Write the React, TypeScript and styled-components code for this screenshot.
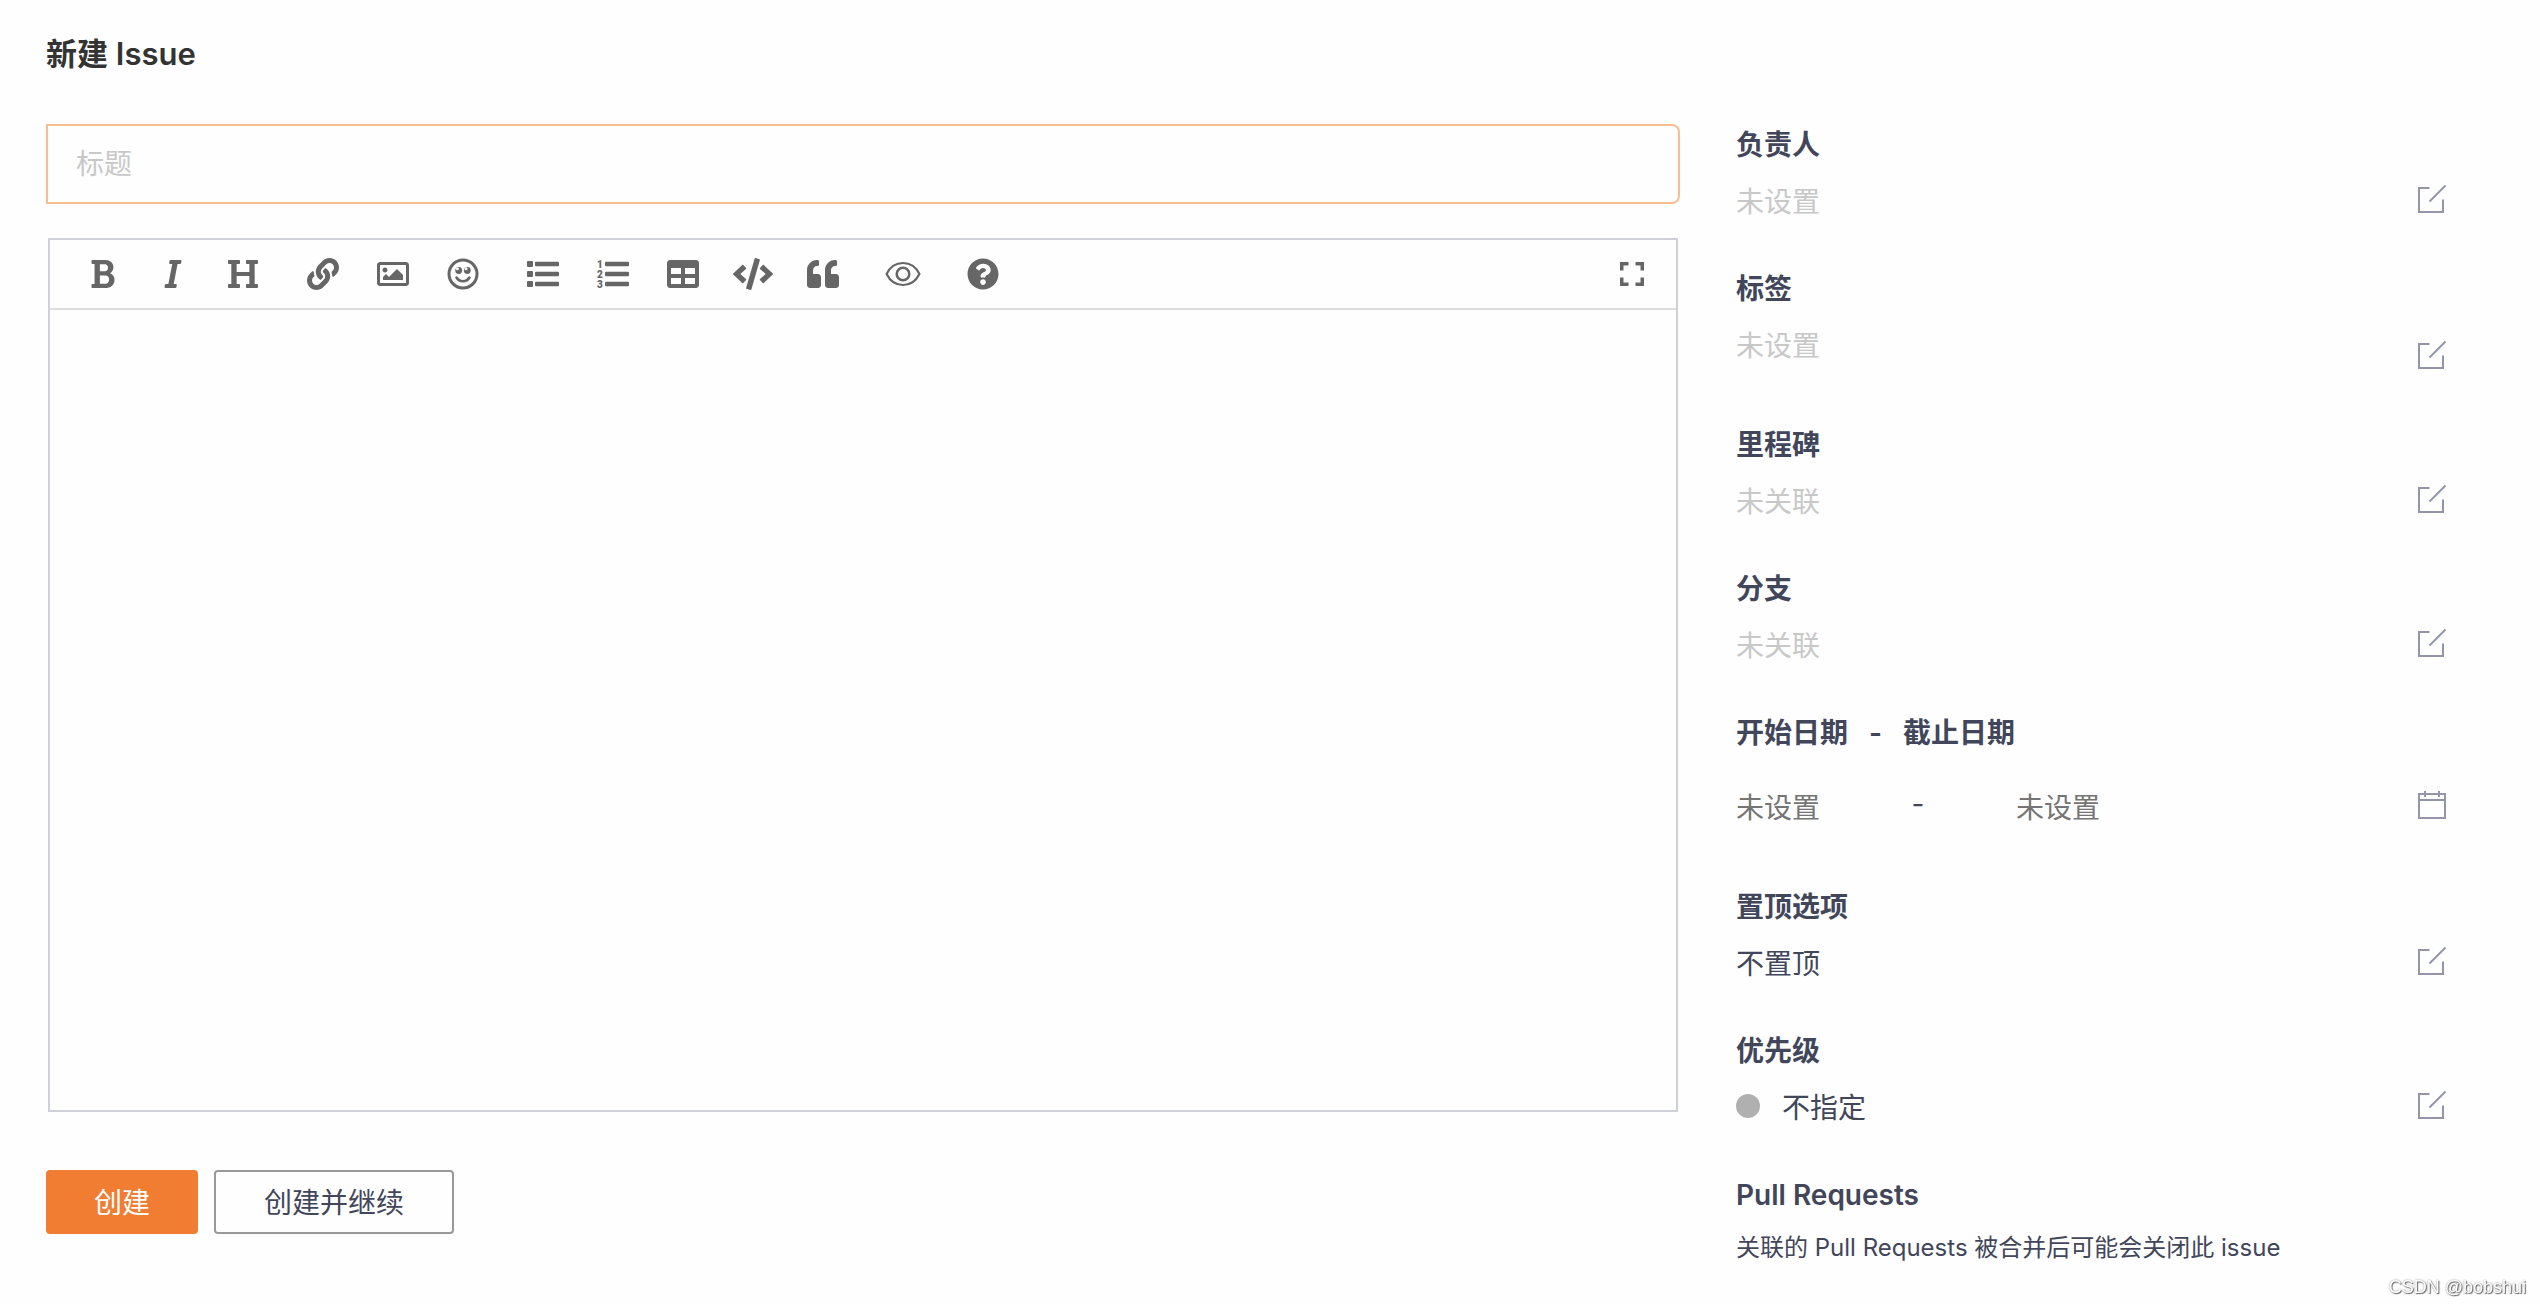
import React from "react";
import styled, { createGlobalStyle } from "styled-components";
import { FaCode, FaLink, FaQuestionCircle, FaQuoteLeft, FaRegImage, FaTable } from "react-icons/fa";

const ink = "#41465b";
const muted = "#c8c8c8";
const iconGrey = "#666666";
const line = "#d0d0dd";

const GlobalStyle = createGlobalStyle`
  *, *::before, *::after { box-sizing: border-box; }
  body {
    margin: 0;
    background: #fefefe;
    color: ${ink};
    font-family: Inter, "Noto Sans CJK SC", sans-serif;
    font-size: 28px;
  }
  button, input, textarea { font: inherit; color: inherit; }
`;

const Page = styled.main`
  padding: 30px 92px 30px 46px;
`;

const PageTitle = styled.h1`
  margin: 0;
  font-size: 31px;
  line-height: 48px;
  font-weight: 600;
  color: #333333;
`;

const Columns = styled.div`
  display: grid;
  grid-template-columns: minmax(0, 1fr) 712px;
  column-gap: 56px;
  align-items: start;
  margin-top: 38px;
`;

const Form = styled.form`
  padding-top: 8px;
`;

const TitleInput = styled.input`
  display: block;
  width: 100%;
  height: 80px;
  padding: 0 28px;
  border: 2px solid #f9bd92;
  border-radius: 0 8px 8px 0;
  background: transparent;
  outline: none;
  &::placeholder { color: ${muted}; opacity: 1; }
`;

const Editor = styled.section`
  margin: 34px 2px 0;
  border: 2px solid ${line};
`;

const Toolbar = styled.div`
  display: flex;
  align-items: center;
  gap: 20px;
  height: 70px;
  padding: 0 14px 0 23px;
  border-bottom: 2px solid #dddddd;
  color: ${iconGrey};
`;

const ToolGroup = styled.div<{ $end?: boolean }>`
  display: flex;
  gap: 10px;
  margin-left: ${(p) => (p.$end ? "auto" : "0")};
`;

const ToolButton = styled.button`
  display: grid;
  place-items: center;
  width: 60px;
  height: 60px;
  padding: 0;
  border: 0;
  background: none;
  cursor: pointer;
`;

const CodeIcon = styled(FaCode)`
  width: 40px;
  height: 32px;
`;

const Body = styled.textarea`
  display: block;
  width: 100%;
  height: 800px;
  padding: 20px 28px;
  border: 0;
  outline: none;
  resize: none;
  background: transparent;
`;

const Actions = styled.div`
  display: flex;
  gap: 16px;
  margin-top: 58px;
`;

const ActionButton = styled.button<{ $primary?: boolean }>`
  height: 64px;
  padding: 0 ${(p) => (p.$primary ? "46px" : "48px")} 2px;
  border: 2px solid ${(p) => (p.$primary ? "#f07d32" : "#999999")};
  border-radius: 4px;
  background: ${(p) => (p.$primary ? "#f07d32" : "transparent")};
  color: ${(p) => (p.$primary ? "#ffffff" : ink)};
  cursor: pointer;
`;

const Sidebar = styled.aside`
  display: flex;
  flex-direction: column;
  gap: 36px;
`;

const FieldLabel = styled.h2`
  display: flex;
  gap: 21px;
  margin: 0;
  font-size: 28px;
  line-height: 58px;
  font-weight: 600;
`;

const FieldRow = styled.div<{ $tall?: boolean }>`
  display: flex;
  justify-content: space-between;
  align-items: flex-end;
  height: ${(p) => (p.$tall ? "62px" : "50px")};
`;

const Value = styled.span<{ $unset?: boolean }>`
  display: flex;
  align-items: center;
  align-self: flex-start;
  gap: 22px;
  line-height: 56px;
  color: ${(p) => (p.$unset ? muted : ink)};
`;

const Dot = styled.i`
  width: 24px;
  height: 24px;
  margin-bottom: 4px;
  border-radius: 50%;
  background: #b0b0b0;
`;

const IconButton = styled.button`
  display: grid;
  place-items: center;
  width: 32px;
  height: 50px;
  padding: 0;
  border: 0;
  background: none;
  color: #9296a8;
  cursor: pointer;
`;

const DateRow = styled.div`
  display: grid;
  grid-template-columns: 160px 44px 1fr 32px;
  align-items: start;
  height: 56px;
  margin: 18px 0 6px;
  line-height: 48px;
  text-align: center;
`;

const DateInput = styled.input<{ $end?: boolean }>`
  display: block;
  width: ${(p) => (p.$end ? "240px" : "160px")};
  height: 56px;
  padding: 0 0 0 ${(p) => (p.$end ? "76px" : "0")};
  border: 0;
  outline: none;
  background: transparent;
  &::placeholder { color: #757575; opacity: 1; }
`;

const Note = styled.p`
  margin: 0;
  font-size: 24px;
  line-height: 48px;
`;

const Watermark = styled.small`
  position: fixed;
  right: 14px;
  bottom: 4px;
  font-family: "Liberation Sans", Arial, sans-serif;
  font-size: 18px;
  line-height: 26px;
  color: #ffffff;
  text-shadow: 1px 1px 1px #666666, 0 0 2px #888888;
`;

const EditIcon = () => (
  <svg width="32" height="32" viewBox="0 0 32 32" fill="none" stroke="currentColor" strokeWidth="2" aria-hidden="true">
    <path d="M13.5 5H3v24h24V16.500" />
    <path d="M13.500 18.500L29.500 2.500" />
  </svg>
);

const CalendarIcon = () => (
  <svg width="32" height="32" viewBox="0 0 32 32" fill="none" stroke="currentColor" strokeWidth="2" aria-hidden="true">
    <path d="M3 5h26v24H3zM3 11h26M9 2v6M23 2v6" />
  </svg>
);

const BoldIcon = () => (
  <svg width="24" height="32" viewBox="0 0 384 512" fill="currentColor" aria-hidden="true">
    <path d="M304.793 243.891c33.639-18.537 53.657-54.16 53.657-95.693 0-48.236-26.25-87.626-68.626-104.179C265.138 34.01 240.849 32 209.661 32H24c-8.837 0-16 7.163-16 16v33.049c0 8.837 7.163 16 16 16h33.113v318.53H24c-8.837 0-16 7.163-16 16V464c0 8.837 7.163 16 16 16h195.69c24.203 0 44.834-1.289 66.866-7.584C337.52 457.193 376 410.647 376 350.014c0-52.168-26.573-91.684-71.207-106.123zM142.217 100.809h67.444c16.294 0 27.536 2.019 37.525 6.717 15.828 8.479 24.906 26.502 24.906 49.446 0 35.029-20.32 56.79-53.029 56.79h-76.846V100.809zm112.642 305.475c-10.14 4.056-22.677 4.907-31.409 4.907h-81.233V281.943h84.367c39.645 0 63.057 25.38 63.057 63.057.001 28.425-13.66 52.483-34.782 61.284z" />
  </svg>
);

const ItalicIcon = () => (
  <svg width="20" height="32" viewBox="0 0 320 512" fill="currentColor" aria-hidden="true">
    <path d="M204.758 416h-33.849l62.092-320h40.725a16 16 0 0 0 15.704-12.937l6.242-32C297.599 41.184 290.034 32 279.968 32H120.235a16 16 0 0 0-15.704 12.937l-6.242 32C96.362 86.816 103.927 96 113.993 96h33.846l-62.09 320H46.278a16 16 0 0 0-15.704 12.935l-6.245 32C22.402 470.815 29.967 480 40.034 480h158.479a16 16 0 0 0 15.704-12.935l6.245-32c1.927-9.88-5.638-19.065-15.704-19.065z" />
  </svg>
);

const HeadingIcon = () => (
  <svg width="32" height="32" viewBox="0 0 512 512" fill="currentColor" aria-hidden="true">
    <path d="M496 80V48c0-8.837-7.163-16-16-16H320c-8.837 0-16 7.163-16 16v32c0 8.837 7.163 16 16 16h37.621v128H154.379V96H192c8.837 0 16-7.163 16-16V48c0-8.837-7.163-16-16-16H32c-8.837 0-16 7.163-16 16v32c0 8.837 7.163 16 16 16h37.275v320H32c-8.837 0-16 7.163-16 16v32c0 8.837 7.163 16 16 16h160c8.837 0 16-7.163 16-16v-32c0-8.837-7.163-16-16-16h-37.621V288H357.62v128H320c-8.837 0-16 7.163-16 16v32c0 8.837 7.163 16 16 16h160c8.837 0 16-7.163 16-16v-32c0-8.837-7.163-16-16-16h-37.275V96H480c8.837 0 16-7.163 16-16z" />
  </svg>
);

const SmileIcon = () => (
  <svg width="32" height="32" viewBox="0 0 32 32" fill="none" stroke="currentColor" aria-hidden="true">
    <circle cx="16" cy="16" r="14" strokeWidth="3" />
    <path d="M9.500 19.500c3 5 10 5 13 0" strokeWidth="2.600" strokeLinecap="round" />
    <g fill="currentColor" stroke="none">
      <circle cx="11.700" cy="12.500" r="3.400" />
      <circle cx="20.300" cy="12.500" r="3.400" />
    </g>
    <g fill="#fefefe" stroke="none">
      <circle cx="10.400" cy="10.800" r="1.500" />
      <circle cx="19" cy="10.800" r="1.500" />
    </g>
  </svg>
);

const ListLines = () => (
  <>
    <rect x="8" y="3.750" width="24" height="4.500" rx="1" />
    <rect x="8" y="13.750" width="24" height="4.500" rx="1" />
    <rect x="8" y="23.750" width="24" height="4.500" rx="1" />
  </>
);

const BulletListIcon = () => (
  <svg width="32" height="32" viewBox="0 0 32 32" fill="currentColor" aria-hidden="true">
    <rect x="0" y="3" width="6" height="6" rx="1" />
    <rect x="0" y="13" width="6" height="6" rx="1" />
    <rect x="0" y="23" width="6" height="6" rx="1" />
    <ListLines />
  </svg>
);

const OrderedMark = styled.text`
  font: 900 10px Roboto, sans-serif;
`;

const OrderedListIcon = () => (
  <svg width="32" height="32" viewBox="0 0 32 32" fill="currentColor" aria-hidden="true">
    <OrderedMark x="0" y="9.500">1</OrderedMark>
    <OrderedMark x="0" y="19.500">2</OrderedMark>
    <OrderedMark x="0" y="29.500">3</OrderedMark>
    <ListLines />
  </svg>
);

const EyeIcon = () => (
  <svg width="36" height="32" viewBox="0 0 36 32" fill="none" stroke="currentColor" strokeWidth="2.200" aria-hidden="true">
    <path d="M1.600 16C5 9 11 5 18 5s13 4 16.400 11C31 23 25 27 18 27S5 23 1.600 16z" />
    <circle cx="18" cy="16" r="6.300" strokeWidth="2.500" />
  </svg>
);

const FullscreenIcon = () => (
  <svg width="26" height="26" viewBox="0 0 26 26" fill="none" stroke="currentColor" strokeWidth="3.500" aria-hidden="true">
    <path d="M2.750 9.500V2.750H9.500M16.500 2.750h6.750V9.500M23.250 16.500v6.750H16.500M9.500 23.250H2.750V16.500" />
  </svg>
);

type Tool = { name: string; icon: React.ReactNode };

const toolGroups: Tool[][] = [
  [
    { name: "粗体", icon: <BoldIcon /> },
    { name: "斜体", icon: <ItalicIcon /> },
    { name: "标题", icon: <HeadingIcon /> },
  ],
  [
    { name: "链接", icon: <FaLink size={32} /> },
    { name: "图片", icon: <FaRegImage size={32} /> },
    { name: "表情", icon: <SmileIcon /> },
  ],
  [
    { name: "无序列表", icon: <BulletListIcon /> },
    { name: "有序列表", icon: <OrderedListIcon /> },
    { name: "表格", icon: <FaTable size={32} /> },
    { name: "代码", icon: <CodeIcon /> },
    { name: "引用", icon: <FaQuoteLeft size={32} /> },
  ],
  [{ name: "预览", icon: <EyeIcon /> }],
  [{ name: "帮助", icon: <FaQuestionCircle size={32} /> }],
];

type FieldProps = { label: string; value: string; unset?: boolean; tall?: boolean; dot?: boolean };

const Field = ({ label, value, unset, tall, dot }: FieldProps) => (
  <section>
    <FieldLabel>{label}</FieldLabel>
    <FieldRow $tall={tall}>
      <Value $unset={unset}>
        {dot && <Dot />}
        {value}
      </Value>
      <IconButton type="button" aria-label={`编辑${label}`}>
        <EditIcon />
      </IconButton>
    </FieldRow>
  </section>
);

export default function App() {
  return (
    <>
      <GlobalStyle />
      <Page>
        <PageTitle>新建 Issue</PageTitle>
        <Columns>
          <Form onSubmit={(e) => e.preventDefault()}>
            <TitleInput type="text" placeholder="标题" aria-label="标题" />
            <Editor>
              <Toolbar>
                {toolGroups.map((group, i) => (
                  <ToolGroup key={i}>
                    {group.map((tool) => (
                      <ToolButton key={tool.name} type="button" aria-label={tool.name}>
                        {tool.icon}
                      </ToolButton>
                    ))}
                  </ToolGroup>
                ))}
                <ToolGroup $end>
                  <ToolButton type="button" aria-label="全屏">
                    <FullscreenIcon />
                  </ToolButton>
                </ToolGroup>
              </Toolbar>
              <Body aria-label="描述" />
            </Editor>
            <Actions>
              <ActionButton type="submit" $primary>创建</ActionButton>
              <ActionButton type="button">创建并继续</ActionButton>
            </Actions>
          </Form>
          <Sidebar>
            <Field label="负责人" value="未设置" unset />
            <Field label="标签" value="未设置" unset tall />
            <Field label="里程碑" value="未关联" unset />
            <Field label="分支" value="未关联" unset />
            <section>
              <FieldLabel>
                <span>开始日期</span>
                <span>-</span>
                <span>截止日期</span>
              </FieldLabel>
              <DateRow>
                <DateInput type="text" placeholder="未设置" aria-label="开始日期" />
                <span>-</span>
                <DateInput type="text" placeholder="未设置" aria-label="截止日期" $end />
                <IconButton type="button" aria-label="选择日期">
                  <CalendarIcon />
                </IconButton>
              </DateRow>
            </section>
            <Field label="置顶选项" value="不置顶" />
            <Field label="优先级" value="不指定" dot />
            <section>
              <FieldLabel>Pull Requests</FieldLabel>
              <Note>关联的 Pull Requests 被合并后可能会关闭此 issue</Note>
            </section>
          </Sidebar>
        </Columns>
      </Page>
      <Watermark>CSDN @bobshui</Watermark>
    </>
  );
}
